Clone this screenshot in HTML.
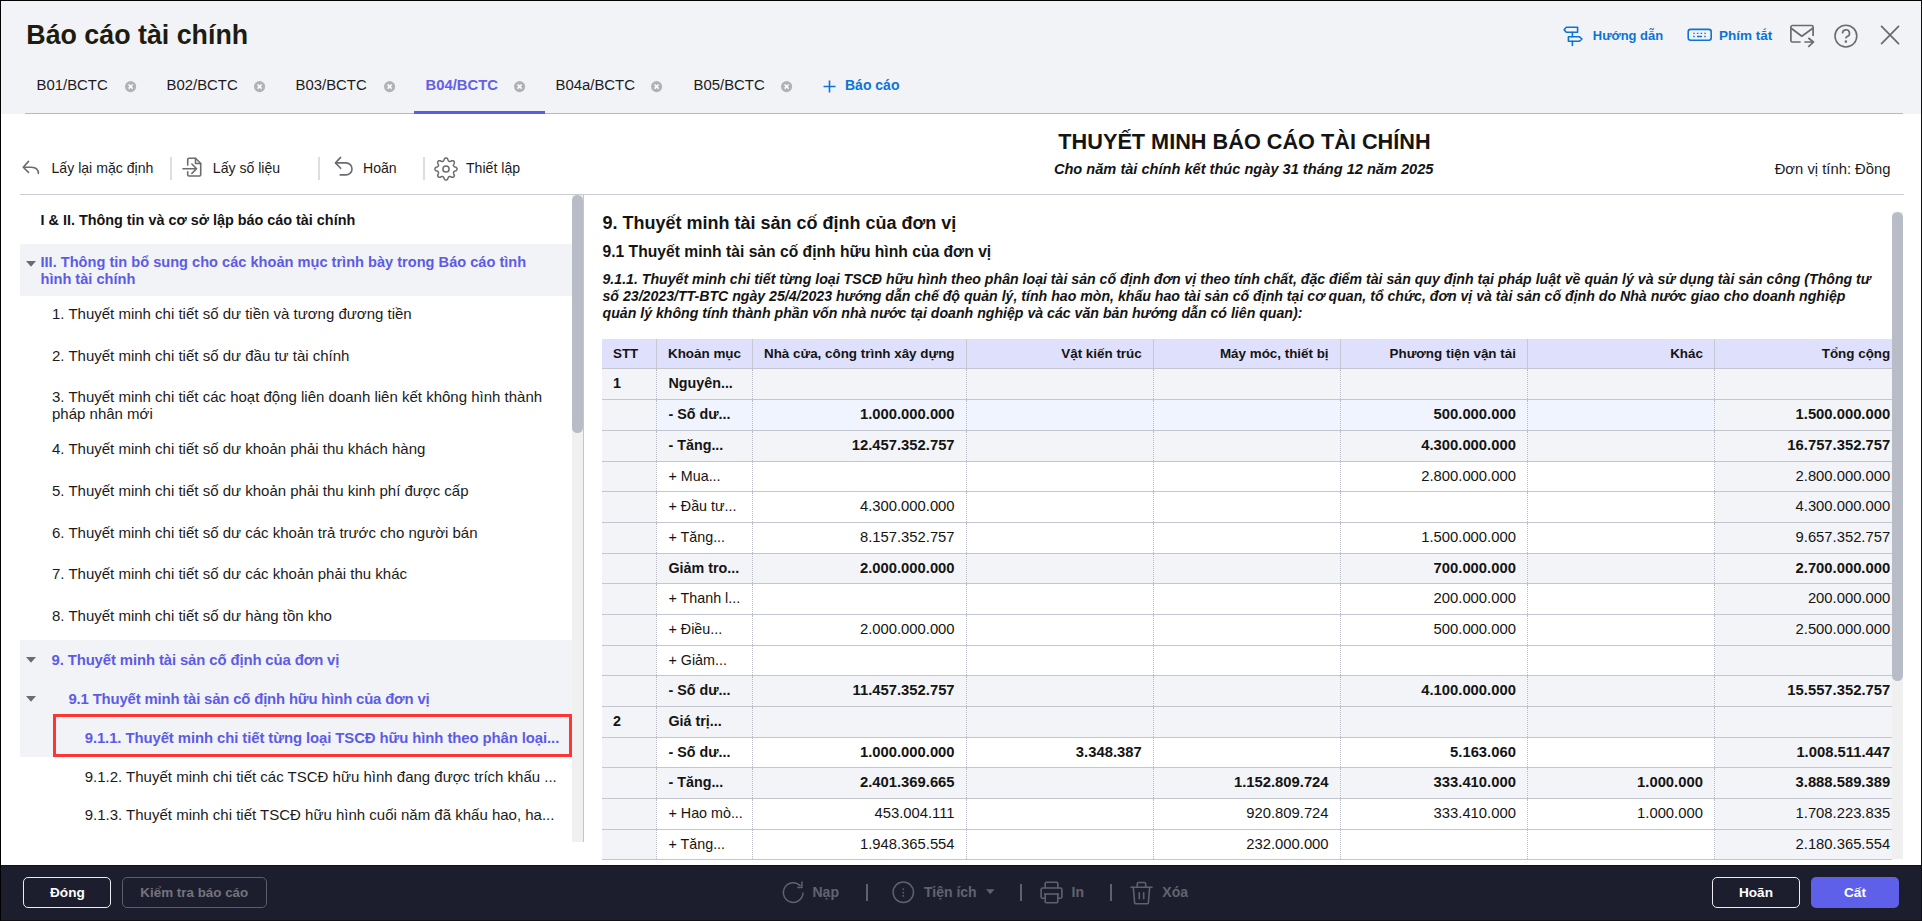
<!DOCTYPE html>
<html><head><meta charset="utf-8">
<style>
*{margin:0;padding:0;box-sizing:border-box}
html,body{width:1922px;height:921px;overflow:hidden;background:#000}
body{font-family:"Liberation Sans",sans-serif;position:relative}
.a{position:absolute;white-space:nowrap}
svg.a{overflow:visible}
</style></head><body>
<div class="a" style="left:0px;top:0px;width:1922px;height:921px;background:#fff;"></div>
<div class="a" style="left:1px;top:1px;width:1920px;height:112.5px;background:#f2f3f7;"></div>
<div class="a" style="left:26.3px;top:22.00px;font-size:26.8px;line-height:26.8px;color:#1e1c10;font-weight:bold;">Báo cáo tài chính</div>
<div class="a" style="left:36.5px;top:78.00px;font-size:14.9px;line-height:14.9px;color:#1b1b1b;">B01/BCTC</div>
<svg class="a" style="left:124.9px;top:81.3px" width="11.2" height="11.2" viewBox="0 0 11 11"><circle cx="5.5" cy="5.5" r="5.5" fill="#b1b1b6"/><path d="M3.5 3.5L7.5 7.5M7.5 3.5L3.5 7.5" stroke="#fff" stroke-width="1.5"/></svg>
<div class="a" style="left:166.5px;top:78.00px;font-size:14.9px;line-height:14.9px;color:#1b1b1b;">B02/BCTC</div>
<svg class="a" style="left:254.4px;top:81.3px" width="11.2" height="11.2" viewBox="0 0 11 11"><circle cx="5.5" cy="5.5" r="5.5" fill="#b1b1b6"/><path d="M3.5 3.5L7.5 7.5M7.5 3.5L3.5 7.5" stroke="#fff" stroke-width="1.5"/></svg>
<div class="a" style="left:295.5px;top:78.00px;font-size:14.9px;line-height:14.9px;color:#1b1b1b;">B03/BCTC</div>
<svg class="a" style="left:384.4px;top:81.3px" width="11.2" height="11.2" viewBox="0 0 11 11"><circle cx="5.5" cy="5.5" r="5.5" fill="#b1b1b6"/><path d="M3.5 3.5L7.5 7.5M7.5 3.5L3.5 7.5" stroke="#fff" stroke-width="1.5"/></svg>
<div class="a" style="left:425.5px;top:78.00px;font-size:14.8px;line-height:14.8px;color:#6360e6;font-weight:bold;">B04/BCTC</div>
<svg class="a" style="left:514.4px;top:81.3px" width="11.2" height="11.2" viewBox="0 0 11 11"><circle cx="5.5" cy="5.5" r="5.5" fill="#b1b1b6"/><path d="M3.5 3.5L7.5 7.5M7.5 3.5L3.5 7.5" stroke="#fff" stroke-width="1.5"/></svg>
<div class="a" style="left:555.5px;top:78.00px;font-size:14.9px;line-height:14.9px;color:#1b1b1b;">B04a/BCTC</div>
<svg class="a" style="left:651.4px;top:81.3px" width="11.2" height="11.2" viewBox="0 0 11 11"><circle cx="5.5" cy="5.5" r="5.5" fill="#b1b1b6"/><path d="M3.5 3.5L7.5 7.5M7.5 3.5L3.5 7.5" stroke="#fff" stroke-width="1.5"/></svg>
<div class="a" style="left:693.5px;top:78.00px;font-size:14.9px;line-height:14.9px;color:#1b1b1b;">B05/BCTC</div>
<svg class="a" style="left:781.4px;top:81.3px" width="11.2" height="11.2" viewBox="0 0 11 11"><circle cx="5.5" cy="5.5" r="5.5" fill="#b1b1b6"/><path d="M3.5 3.5L7.5 7.5M7.5 3.5L3.5 7.5" stroke="#fff" stroke-width="1.5"/></svg>
<svg class="a" style="left:823px;top:79.5px" width="13" height="13" viewBox="0 0 13 13"><path d="M6.5 0.5V12.5M0.5 6.5H12.5" stroke="#0b74d6" stroke-width="1.6"/></svg>
<div class="a" style="left:845px;top:78.00px;font-size:14px;line-height:14px;color:#0b74d6;font-weight:bold;">Báo cáo</div>
<div class="a" style="left:25px;top:112.5px;width:1878px;height:1.2px;background:#b9b9bd;"></div>
<div class="a" style="left:414px;top:110.5px;width:131px;height:3px;background:#5b5ce6;"></div>
<svg class="a" style="left:1558px;top:20px" width="32" height="32" viewBox="0 0 32 32" fill="none" stroke="#0b74d6" stroke-width="1.6" stroke-linejoin="round" stroke-linecap="round"><path d="M8.3 7.2H19.6V12.2H8.3L6.1 9.7Z"/><path d="M14.4 12.2V16.7M14.4 21.3V25.4"/><path d="M10.4 16.7H21.2L24 19L21.2 21.3H10.4Z"/></svg>
<div class="a" style="left:1592.8px;top:30.00px;font-size:12.95px;line-height:12.95px;color:#0b74d6;font-weight:bold;">Hướng dẫn</div>
<svg class="a" style="left:1682px;top:20px" width="40" height="30" viewBox="0 0 40 30" fill="none" stroke="#0b74d6" stroke-width="1.6"><rect x="6.2" y="9.4" width="23" height="10.8" rx="2.4"/><path d="M11.2 13.4h1.5M14.9 13.4h1.5M18.6 13.4h1.5M22.3 13.4h1.5M11.2 16.5h1.5M15 16.5h5M22.3 16.5h1.5" stroke-width="1.3"/></svg>
<div class="a" style="left:1719px;top:29.00px;font-size:13.5px;line-height:13.5px;color:#0b74d6;font-weight:bold;">Phím tắt</div>
<svg class="a" style="left:1785px;top:18px" width="34" height="34" viewBox="0 0 34 34" fill="none" stroke="#6b6b6e" stroke-width="1.7" stroke-linejoin="round"><path d="M15.6 24H7.3A1.5 1.5 0 0 1 5.9 22.5V9A1.5 1.5 0 0 1 7.3 7.5H26.6A1.5 1.5 0 0 1 28.1 9V18.1"/><path d="M6.2 10.3L16.8 18.2L27.8 10.3"/><path d="M19.4 24H28.5M23.3 20L28.5 24L23.3 28.8"/></svg>
<svg class="a" style="left:1833px;top:23px" width="26" height="26" viewBox="0 0 26 26" fill="none" stroke="#6b6b6e" stroke-width="1.6"><circle cx="12.9" cy="13.1" r="10.9"/><path d="M9.5 10.4A3.5 3.5 0 1 1 14.2 13.6C13.3 14 12.9 14.5 12.9 15.2V15.6"/><circle cx="12.9" cy="18.6" r="0.5" fill="#6b6b6e"/></svg>
<svg class="a" style="left:1878px;top:23px" width="24" height="24" viewBox="0 0 24 24" fill="none" stroke="#6b6b6e" stroke-width="1.7"><path d="M3.1 2.8L21 21.2M21 2.8L3.1 21.2"/></svg>
<svg class="a" style="left:15px;top:150px" width="30" height="35" viewBox="0 0 30 35" fill="none" stroke="#6b6b70" stroke-width="1.6" stroke-linecap="round" stroke-linejoin="round"><path d="M13.5 11.4L8.3 17.2L13.5 22.4"/><path d="M8.6 17.2H16.5Q23.2 17.4 23.4 23.4"/></svg>
<div class="a" style="left:51.5px;top:161.00px;font-size:14.1px;line-height:14.1px;color:#1b1b1b;">Lấy lại mặc định</div>
<div class="a" style="left:170.3px;top:157.3px;width:1.3px;height:22.4px;background:#dedee2;"></div>
<svg class="a" style="left:175px;top:150px" width="30" height="35" viewBox="0 0 30 35" fill="none" stroke="#6b6b70" stroke-width="1.6" stroke-linejoin="round" stroke-linecap="round"><path d="M12.7 15V9.6A1.3 1.3 0 0 1 14 8.3H20.5L25.7 13.5V24.7A1.3 1.3 0 0 1 24.4 26H14A1.3 1.3 0 0 1 12.7 24.7V21.9"/><path d="M20.5 8.3V13.5H25.7"/><path d="M8 18.7H21.6M16.9 14L21.6 18.7L16.9 23.4"/></svg>
<div class="a" style="left:212.8px;top:161.00px;font-size:14.1px;line-height:14.1px;color:#1b1b1b;">Lấy số liệu</div>
<div class="a" style="left:318.4px;top:157.3px;width:1.3px;height:22.4px;background:#dedee2;"></div>
<svg class="a" style="left:325px;top:150px" width="35" height="35" viewBox="0 0 35 35" fill="none" stroke="#6b6b70" stroke-width="1.6" stroke-linecap="round" stroke-linejoin="round"><path d="M15.6 7.4L10.5 12.9L15.6 18.3"/><path d="M10.7 12.9H21A6 6 0 0 1 21 24.9H15.2"/></svg>
<div class="a" style="left:363px;top:161.00px;font-size:14.1px;line-height:14.1px;color:#1b1b1b;">Hoãn</div>
<div class="a" style="left:423.3px;top:157.3px;width:1.3px;height:22.4px;background:#dedee2;"></div>
<svg class="a" style="left:434px;top:156.5px" width="24" height="24" viewBox="0 0 24 24" fill="none" stroke="#6b6b70" stroke-width="1.5" stroke-linejoin="round"><circle cx="12" cy="12" r="3.1"/><path d="M23.05 12.00L23.04 12.22L22.99 12.43L22.92 12.64L22.82 12.85L22.70 13.05L22.54 13.25L22.36 13.43L22.14 13.61L21.88 13.76L21.46 13.88L21.05 13.99L20.79 14.11L20.56 14.23L20.36 14.36L20.18 14.48L20.03 14.61L19.90 14.74L19.79 14.87L19.69 15.01L19.62 15.16L19.57 15.31L19.54 15.47L19.52 15.65L19.52 15.83L19.54 16.03L19.58 16.24L19.63 16.47L19.70 16.72L19.81 17.00L20.02 17.36L20.23 17.74L20.30 18.03L20.34 18.31L20.34 18.57L20.31 18.82L20.26 19.05L20.18 19.27L20.08 19.47L19.96 19.65L19.81 19.81L19.65 19.96L19.47 20.08L19.27 20.18L19.05 20.26L18.82 20.31L18.57 20.34L18.31 20.34L18.03 20.30L17.74 20.23L17.36 20.02L17.00 19.81L16.72 19.70L16.47 19.63L16.24 19.58L16.03 19.54L15.83 19.52L15.65 19.52L15.47 19.54L15.31 19.57L15.16 19.62L15.01 19.69L14.87 19.79L14.74 19.90L14.61 20.03L14.48 20.18L14.36 20.36L14.23 20.56L14.11 20.79L13.99 21.05L13.88 21.46L13.76 21.88L13.61 22.14L13.43 22.36L13.25 22.54L13.05 22.70L12.85 22.82L12.64 22.92L12.43 22.99L12.22 23.04L12.00 23.05L11.78 23.04L11.57 22.99L11.36 22.92L11.15 22.82L10.95 22.70L10.75 22.54L10.57 22.36L10.39 22.14L10.24 21.88L10.12 21.46L10.01 21.05L9.89 20.79L9.77 20.56L9.64 20.36L9.52 20.18L9.39 20.03L9.26 19.90L9.13 19.79L8.99 19.69L8.84 19.62L8.69 19.57L8.53 19.54L8.35 19.52L8.17 19.52L7.97 19.54L7.76 19.58L7.53 19.63L7.28 19.70L7.00 19.81L6.64 20.02L6.26 20.23L5.97 20.30L5.69 20.34L5.43 20.34L5.18 20.31L4.95 20.26L4.73 20.18L4.53 20.08L4.35 19.96L4.19 19.81L4.04 19.65L3.92 19.47L3.82 19.27L3.74 19.05L3.69 18.82L3.66 18.57L3.66 18.31L3.70 18.03L3.77 17.74L3.98 17.36L4.19 17.00L4.30 16.72L4.37 16.47L4.42 16.24L4.46 16.03L4.48 15.83L4.48 15.65L4.46 15.47L4.43 15.31L4.38 15.16L4.31 15.01L4.21 14.87L4.10 14.74L3.97 14.61L3.82 14.48L3.64 14.36L3.44 14.23L3.21 14.11L2.95 13.99L2.54 13.88L2.12 13.76L1.86 13.61L1.64 13.43L1.46 13.25L1.30 13.05L1.18 12.85L1.08 12.64L1.01 12.43L0.96 12.22L0.95 12.00L0.96 11.78L1.01 11.57L1.08 11.36L1.18 11.15L1.30 10.95L1.46 10.75L1.64 10.57L1.86 10.39L2.12 10.24L2.54 10.12L2.95 10.01L3.21 9.89L3.44 9.77L3.64 9.64L3.82 9.52L3.97 9.39L4.10 9.26L4.21 9.13L4.31 8.99L4.38 8.84L4.43 8.69L4.46 8.53L4.48 8.35L4.48 8.17L4.46 7.97L4.42 7.76L4.37 7.53L4.30 7.28L4.19 7.00L3.98 6.64L3.77 6.26L3.70 5.97L3.66 5.69L3.66 5.43L3.69 5.18L3.74 4.95L3.82 4.73L3.92 4.53L4.04 4.35L4.19 4.19L4.35 4.04L4.53 3.92L4.73 3.82L4.95 3.74L5.18 3.69L5.43 3.66L5.69 3.66L5.97 3.70L6.26 3.77L6.64 3.98L7.00 4.19L7.28 4.30L7.53 4.37L7.76 4.42L7.97 4.46L8.17 4.48L8.35 4.48L8.53 4.46L8.69 4.43L8.84 4.38L8.99 4.31L9.13 4.21L9.26 4.10L9.39 3.97L9.52 3.82L9.64 3.64L9.77 3.44L9.89 3.21L10.01 2.95L10.12 2.54L10.24 2.12L10.39 1.86L10.57 1.64L10.75 1.46L10.95 1.30L11.15 1.18L11.36 1.08L11.57 1.01L11.78 0.96L12.00 0.95L12.22 0.96L12.43 1.01L12.64 1.08L12.85 1.18L13.05 1.30L13.25 1.46L13.43 1.64L13.61 1.86L13.76 2.12L13.88 2.54L13.99 2.95L14.11 3.21L14.23 3.44L14.36 3.64L14.48 3.82L14.61 3.97L14.74 4.10L14.87 4.21L15.01 4.31L15.16 4.38L15.31 4.43L15.47 4.46L15.65 4.48L15.83 4.48L16.03 4.46L16.24 4.42L16.47 4.37L16.72 4.30L17.00 4.19L17.36 3.98L17.74 3.77L18.03 3.70L18.31 3.66L18.57 3.66L18.82 3.69L19.05 3.74L19.27 3.82L19.47 3.92L19.65 4.04L19.81 4.19L19.96 4.35L20.08 4.53L20.18 4.73L20.26 4.95L20.31 5.18L20.34 5.43L20.34 5.69L20.30 5.97L20.23 6.26L20.02 6.64L19.81 7.00L19.70 7.28L19.63 7.53L19.58 7.76L19.54 7.97L19.52 8.17L19.52 8.35L19.54 8.53L19.57 8.69L19.62 8.84L19.69 8.99L19.79 9.13L19.90 9.26L20.03 9.39L20.18 9.52L20.36 9.64L20.56 9.77L20.79 9.89L21.05 10.01L21.46 10.12L21.88 10.24L22.14 10.39L22.36 10.57L22.54 10.75L22.70 10.95L22.82 11.15L22.92 11.36L22.99 11.57L23.04 11.78Z"/></svg>
<div class="a" style="left:466px;top:161.00px;font-size:14.1px;line-height:14.1px;color:#1b1b1b;">Thiết lập</div>
<div class="a" style="left:19.5px;top:194px;width:1884px;height:1px;background:#c9ccd4;"></div>
<div class="a" style="left:994.5px;width:500px;text-align:center;top:131.00px;font-size:21.7px;line-height:21.7px;color:#141414;font-weight:bold;">THUYẾT MINH BÁO CÁO TÀI CHÍNH</div>
<div class="a" style="left:993.7px;width:500px;text-align:center;top:162.00px;font-size:14.6px;line-height:14.6px;color:#141414;font-weight:bold;font-style:italic;">Cho năm tài chính kết thúc ngày 31 tháng 12 năm 2025</div>
<div class="a" style="left:1690.5px;width:200px;text-align:right;top:162.00px;font-size:14.8px;line-height:14.8px;color:#1b1b1b;">Đơn vị tính: Đồng</div>
<div class="a" style="left:40.5px;top:213.00px;font-size:14.4px;line-height:14.4px;color:#141414;font-weight:bold;">I &amp; II. Thông tin và cơ sở lập báo cáo tài chính</div>
<div class="a" style="left:19.5px;top:244px;width:552.8px;height:52px;background:#f2f3f7;"></div>
<svg class="a" style="left:25.9px;top:260.9px" width="10" height="5.8" viewBox="0 0 10 5.8"><path d="M0 0H10L5 5.8Z" fill="#6b6b70"/></svg>
<div class="a" style="left:40.5px;top:255.00px;font-size:14.6px;line-height:14.6px;color:#5d5be6;font-weight:bold;">III. Thông tin bổ sung cho các khoản mục trình bày trong Báo cáo tình</div>
<div class="a" style="left:40.5px;top:272.00px;font-size:14.6px;line-height:14.6px;color:#5d5be6;font-weight:bold;">hình tài chính</div>
<div class="a" style="left:52px;top:306.00px;font-size:15px;line-height:15px;color:#1b1b1b;">1. Thuyết minh chi tiết số dư tiền và tương đương tiền</div>
<div class="a" style="left:52px;top:348.00px;font-size:15px;line-height:15px;color:#1b1b1b;">2. Thuyết minh chi tiết số dư đầu tư tài chính</div>
<div class="a" style="left:52px;top:389.00px;font-size:15px;line-height:15px;color:#1b1b1b;">3. Thuyết minh chi tiết các hoạt động liên doanh liên kết không hình thành</div>
<div class="a" style="left:52px;top:406.00px;font-size:15px;line-height:15px;color:#1b1b1b;">pháp nhân mới</div>
<div class="a" style="left:52px;top:441.00px;font-size:15px;line-height:15px;color:#1b1b1b;">4. Thuyết minh chi tiết số dư khoản phải thu khách hàng</div>
<div class="a" style="left:52px;top:483.00px;font-size:15px;line-height:15px;color:#1b1b1b;">5. Thuyết minh chi tiết số dư khoản phải thu kinh phí được cấp</div>
<div class="a" style="left:52px;top:525.00px;font-size:15px;line-height:15px;color:#1b1b1b;">6. Thuyết minh chi tiết số dư các khoản trả trước cho người bán</div>
<div class="a" style="left:52px;top:566.00px;font-size:15px;line-height:15px;color:#1b1b1b;">7. Thuyết minh chi tiết số dư các khoản phải thu khác</div>
<div class="a" style="left:52px;top:608.00px;font-size:15px;line-height:15px;color:#1b1b1b;">8. Thuyết minh chi tiết số dư hàng tồn kho</div>
<div class="a" style="left:19.5px;top:640px;width:552.8px;height:117px;background:#f2f3f7;"></div>
<svg class="a" style="left:25.9px;top:657.2px" width="10" height="5.8" viewBox="0 0 10 5.8"><path d="M0 0H10L5 5.8Z" fill="#6b6b70"/></svg>
<div class="a" style="left:51.5px;top:653.00px;font-size:14.9px;line-height:14.9px;color:#5d5be6;font-weight:bold;letter-spacing:-0.12px">9. Thuyết minh tài sản cố định của đơn vị</div>
<svg class="a" style="left:25.9px;top:696px" width="10" height="5.8" viewBox="0 0 10 5.8"><path d="M0 0H10L5 5.8Z" fill="#6b6b70"/></svg>
<div class="a" style="left:68.5px;top:692.00px;font-size:14.9px;line-height:14.9px;color:#5d5be6;font-weight:bold;letter-spacing:-0.17px">9.1 Thuyết minh tài sản cố định hữu hình của đơn vị</div>
<div class="a" style="left:53px;top:714px;width:519px;height:43px;border:3px solid #fd3535"></div>
<div class="a" style="left:84.7px;top:731.00px;font-size:14.9px;line-height:14.9px;color:#5d5be6;font-weight:bold;letter-spacing:-0.09px">9.1.1. Thuyết minh chi tiết từng loại TSCĐ hữu hình theo phân loại...</div>
<div class="a" style="left:84.7px;top:769.00px;font-size:15px;line-height:15px;color:#1b1b1b;">9.1.2. Thuyết minh chi tiết các TSCĐ hữu hình đang được trích khấu ...</div>
<div class="a" style="left:84.7px;top:807.00px;font-size:15px;line-height:15px;color:#1b1b1b;">9.1.3. Thuyết minh chi tiết TSCĐ hữu hình cuối năm đã khấu hao, ha...</div>
<div class="a" style="left:572.3px;top:195px;width:10.5px;height:646.8px;background:#f0f0f1;"></div>
<div class="a" style="left:582.5px;top:195px;width:1px;height:646.8px;background:#c3c6ce;"></div>
<div class="a" style="left:572.3px;top:195px;width:10.7px;height:237.7px;background:#b8bcc6;border-radius:5.3px"></div>
<div class="a" style="left:602.5px;top:214.00px;font-size:18px;line-height:18px;color:#141414;font-weight:bold;">9. Thuyết minh tài sản cố định của đơn vị</div>
<div class="a" style="left:602.5px;top:244.00px;font-size:15.66px;line-height:15.66px;color:#141414;font-weight:bold;">9.1 Thuyết minh tài sản cố định hữu hình của đơn vị</div>
<div class="a" style="left:602.5px;top:272.00px;font-size:14.15px;line-height:14.15px;color:#141414;font-weight:bold;font-style:italic;">9.1.1. Thuyết minh chi tiết từng loại TSCĐ hữu hình theo phân loại tài sản cố định đơn vị theo tính chất, đặc điểm tài sản quy định tại pháp luật về quản lý và sử dụng tài sản công (Thông tư</div>
<div class="a" style="left:602.5px;top:289.00px;font-size:14.15px;line-height:14.15px;color:#141414;font-weight:bold;font-style:italic;">số 23/2023/TT-BTC ngày 25/4/2023 hướng dẫn chế độ quản lý, tính hao mòn, khấu hao tài sản cố định tại cơ quan, tổ chức, đơn vị và tài sản cố định do Nhà nước giao cho doanh nghiệp</div>
<div class="a" style="left:602.5px;top:306.00px;font-size:14.15px;line-height:14.15px;color:#141414;font-weight:bold;font-style:italic;">quản lý không tính thành phần vốn nhà nước tại doanh nghiệp và các văn bản hướng dẫn có liên quan):</div>
<div class="a" style="left:1892px;top:212px;width:11px;height:646.7px;background:#f0f0f1;"></div>
<div class="a" style="left:1892px;top:212px;width:11px;height:468.8px;background:#b8bcc6;border-radius:5.5px"></div>
<div class="a" style="left:602px;top:339.3px;width:1290px;height:29.0px;background:#dfe0fc;"></div>
<div class="a" style="left:602px;top:368.3px;width:1290px;height:1px;background:#c3c6cf;"></div>
<div class="a" style="left:655.5px;top:339.3px;width:1px;height:29.0px;background:#c6c8d6;"></div>
<div class="a" style="left:752.0px;top:339.3px;width:1px;height:29.0px;background:#c6c8d6;"></div>
<div class="a" style="left:965.9px;top:339.3px;width:1px;height:29.0px;background:#c6c8d6;"></div>
<div class="a" style="left:1153.0px;top:339.3px;width:1px;height:29.0px;background:#c6c8d6;"></div>
<div class="a" style="left:1339.9px;top:339.3px;width:1px;height:29.0px;background:#c6c8d6;"></div>
<div class="a" style="left:1527.2px;top:339.3px;width:1px;height:29.0px;background:#c6c8d6;"></div>
<div class="a" style="left:1714.2px;top:339.3px;width:1px;height:29.0px;background:#c6c8d6;"></div>
<div class="a" style="left:613px;top:347.00px;font-size:13.4px;line-height:13.4px;color:#141414;font-weight:bold;">STT</div>
<div class="a" style="left:668px;top:347.00px;font-size:13.4px;line-height:13.4px;color:#141414;font-weight:bold;">Khoản mục</div>
<div class="a" style="left:764px;top:347.00px;font-size:13.4px;line-height:13.4px;color:#141414;font-weight:bold;">Nhà cửa, công trình xây dựng</div>
<div class="a" style="left:961.7px;width:180px;text-align:right;top:347.00px;font-size:13.4px;line-height:13.4px;color:#141414;font-weight:bold;">Vật kiến trúc</div>
<div class="a" style="left:1148.6000000000001px;width:180px;text-align:right;top:347.00px;font-size:13.4px;line-height:13.4px;color:#141414;font-weight:bold;">Máy móc, thiết bị</div>
<div class="a" style="left:1335.9px;width:180px;text-align:right;top:347.00px;font-size:13.4px;line-height:13.4px;color:#141414;font-weight:bold;">Phương tiện vận tải</div>
<div class="a" style="left:1522.9px;width:180px;text-align:right;top:347.00px;font-size:13.4px;line-height:13.4px;color:#141414;font-weight:bold;">Khác</div>
<div class="a" style="left:1710.2px;width:180px;text-align:right;top:347.00px;font-size:13.4px;line-height:13.4px;color:#141414;font-weight:bold;">Tổng cộng</div>
<div class="a" style="left:602px;top:369px;width:1290px;height:30px;background:#f3f4f7;"></div>
<div class="a" style="left:602px;top:369px;width:54px;height:30px;background:#f3f4f7;"></div>
<div class="a" style="left:1714.7px;top:369px;width:177.29999999999995px;height:30px;background:#f3f4f7;"></div>
<div class="a" style="left:602px;top:399px;width:1290px;height:1px;background:#c3c6cf;"></div>
<div class="a" style="left:655.5px;top:369px;width:0;height:30px;border-left:1px dotted #b9bcc6"></div>
<div class="a" style="left:752.0px;top:369px;width:0;height:30px;border-left:1px dotted #b9bcc6"></div>
<div class="a" style="left:965.9px;top:369px;width:0;height:30px;border-left:1px dotted #b9bcc6"></div>
<div class="a" style="left:1153.0px;top:369px;width:0;height:30px;border-left:1px dotted #b9bcc6"></div>
<div class="a" style="left:1339.9px;top:369px;width:0;height:30px;border-left:1px dotted #b9bcc6"></div>
<div class="a" style="left:1527.2px;top:369px;width:0;height:30px;border-left:1px dotted #b9bcc6"></div>
<div class="a" style="left:1714.2px;top:369px;width:0;height:30px;border-left:1px dotted #b9bcc6"></div>
<div class="a" style="left:613px;top:376.00px;font-size:14.3px;line-height:14.3px;color:#141414;font-weight:bold;">1</div>
<div class="a" style="left:668.5px;top:376.00px;font-size:14.3px;line-height:14.3px;color:#141414;font-weight:bold;">Nguyên...</div>
<div class="a" style="left:602px;top:400px;width:1290px;height:30px;background:#f0f4fe;"></div>
<div class="a" style="left:602px;top:400px;width:54px;height:30px;background:#f3f4f7;"></div>
<div class="a" style="left:1714.7px;top:400px;width:177.29999999999995px;height:30px;background:#f3f4f7;"></div>
<div class="a" style="left:602px;top:430px;width:1290px;height:1px;background:#c3c6cf;"></div>
<div class="a" style="left:655.5px;top:400px;width:0;height:30px;border-left:1px dotted #b9bcc6"></div>
<div class="a" style="left:752.0px;top:400px;width:0;height:30px;border-left:1px dotted #b9bcc6"></div>
<div class="a" style="left:965.9px;top:400px;width:0;height:30px;border-left:1px dotted #b9bcc6"></div>
<div class="a" style="left:1153.0px;top:400px;width:0;height:30px;border-left:1px dotted #b9bcc6"></div>
<div class="a" style="left:1339.9px;top:400px;width:0;height:30px;border-left:1px dotted #b9bcc6"></div>
<div class="a" style="left:1527.2px;top:400px;width:0;height:30px;border-left:1px dotted #b9bcc6"></div>
<div class="a" style="left:1714.2px;top:400px;width:0;height:30px;border-left:1px dotted #b9bcc6"></div>
<div class="a" style="left:668.5px;top:407.00px;font-size:14.3px;line-height:14.3px;color:#141414;font-weight:bold;">- Số dư...</div>
<div class="a" style="left:774.6px;width:180px;text-align:right;top:407.00px;font-size:14.8px;line-height:14.8px;color:#141414;font-weight:bold;">1.000.000.000</div>
<div class="a" style="left:1335.9px;width:180px;text-align:right;top:407.00px;font-size:14.8px;line-height:14.8px;color:#141414;font-weight:bold;">500.000.000</div>
<div class="a" style="left:1710.2px;width:180px;text-align:right;top:407.00px;font-size:14.8px;line-height:14.8px;color:#141414;font-weight:bold;">1.500.000.000</div>
<div class="a" style="left:602px;top:431px;width:1290px;height:30px;background:#f3f4f7;"></div>
<div class="a" style="left:602px;top:431px;width:54px;height:30px;background:#f3f4f7;"></div>
<div class="a" style="left:1714.7px;top:431px;width:177.29999999999995px;height:30px;background:#f3f4f7;"></div>
<div class="a" style="left:602px;top:461px;width:1290px;height:1px;background:#c3c6cf;"></div>
<div class="a" style="left:655.5px;top:431px;width:0;height:30px;border-left:1px dotted #b9bcc6"></div>
<div class="a" style="left:752.0px;top:431px;width:0;height:30px;border-left:1px dotted #b9bcc6"></div>
<div class="a" style="left:965.9px;top:431px;width:0;height:30px;border-left:1px dotted #b9bcc6"></div>
<div class="a" style="left:1153.0px;top:431px;width:0;height:30px;border-left:1px dotted #b9bcc6"></div>
<div class="a" style="left:1339.9px;top:431px;width:0;height:30px;border-left:1px dotted #b9bcc6"></div>
<div class="a" style="left:1527.2px;top:431px;width:0;height:30px;border-left:1px dotted #b9bcc6"></div>
<div class="a" style="left:1714.2px;top:431px;width:0;height:30px;border-left:1px dotted #b9bcc6"></div>
<div class="a" style="left:668.5px;top:438.00px;font-size:14.3px;line-height:14.3px;color:#141414;font-weight:bold;">- Tăng...</div>
<div class="a" style="left:774.6px;width:180px;text-align:right;top:438.00px;font-size:14.8px;line-height:14.8px;color:#141414;font-weight:bold;">12.457.352.757</div>
<div class="a" style="left:1335.9px;width:180px;text-align:right;top:438.00px;font-size:14.8px;line-height:14.8px;color:#141414;font-weight:bold;">4.300.000.000</div>
<div class="a" style="left:1710.2px;width:180px;text-align:right;top:438.00px;font-size:14.8px;line-height:14.8px;color:#141414;font-weight:bold;">16.757.352.757</div>
<div class="a" style="left:602px;top:462px;width:1290px;height:29px;background:#ffffff;"></div>
<div class="a" style="left:602px;top:462px;width:54px;height:29px;background:#f3f4f7;"></div>
<div class="a" style="left:1714.7px;top:462px;width:177.29999999999995px;height:29px;background:#f3f4f7;"></div>
<div class="a" style="left:602px;top:491px;width:1290px;height:1px;background:#c3c6cf;"></div>
<div class="a" style="left:655.5px;top:462px;width:0;height:29px;border-left:1px dotted #b9bcc6"></div>
<div class="a" style="left:752.0px;top:462px;width:0;height:29px;border-left:1px dotted #b9bcc6"></div>
<div class="a" style="left:965.9px;top:462px;width:0;height:29px;border-left:1px dotted #b9bcc6"></div>
<div class="a" style="left:1153.0px;top:462px;width:0;height:29px;border-left:1px dotted #b9bcc6"></div>
<div class="a" style="left:1339.9px;top:462px;width:0;height:29px;border-left:1px dotted #b9bcc6"></div>
<div class="a" style="left:1527.2px;top:462px;width:0;height:29px;border-left:1px dotted #b9bcc6"></div>
<div class="a" style="left:1714.2px;top:462px;width:0;height:29px;border-left:1px dotted #b9bcc6"></div>
<div class="a" style="left:668.5px;top:469.00px;font-size:14.3px;line-height:14.3px;color:#141414;">+ Mua...</div>
<div class="a" style="left:1335.9px;width:180px;text-align:right;top:469.00px;font-size:14.8px;line-height:14.8px;color:#141414;">2.800.000.000</div>
<div class="a" style="left:1710.2px;width:180px;text-align:right;top:469.00px;font-size:14.8px;line-height:14.8px;color:#141414;">2.800.000.000</div>
<div class="a" style="left:602px;top:492px;width:1290px;height:30px;background:#ffffff;"></div>
<div class="a" style="left:602px;top:492px;width:54px;height:30px;background:#f3f4f7;"></div>
<div class="a" style="left:1714.7px;top:492px;width:177.29999999999995px;height:30px;background:#f3f4f7;"></div>
<div class="a" style="left:602px;top:522px;width:1290px;height:1px;background:#c3c6cf;"></div>
<div class="a" style="left:655.5px;top:492px;width:0;height:30px;border-left:1px dotted #b9bcc6"></div>
<div class="a" style="left:752.0px;top:492px;width:0;height:30px;border-left:1px dotted #b9bcc6"></div>
<div class="a" style="left:965.9px;top:492px;width:0;height:30px;border-left:1px dotted #b9bcc6"></div>
<div class="a" style="left:1153.0px;top:492px;width:0;height:30px;border-left:1px dotted #b9bcc6"></div>
<div class="a" style="left:1339.9px;top:492px;width:0;height:30px;border-left:1px dotted #b9bcc6"></div>
<div class="a" style="left:1527.2px;top:492px;width:0;height:30px;border-left:1px dotted #b9bcc6"></div>
<div class="a" style="left:1714.2px;top:492px;width:0;height:30px;border-left:1px dotted #b9bcc6"></div>
<div class="a" style="left:668.5px;top:499.00px;font-size:14.3px;line-height:14.3px;color:#141414;">+ Đầu tư...</div>
<div class="a" style="left:774.6px;width:180px;text-align:right;top:499.00px;font-size:14.8px;line-height:14.8px;color:#141414;">4.300.000.000</div>
<div class="a" style="left:1710.2px;width:180px;text-align:right;top:499.00px;font-size:14.8px;line-height:14.8px;color:#141414;">4.300.000.000</div>
<div class="a" style="left:602px;top:523px;width:1290px;height:30px;background:#ffffff;"></div>
<div class="a" style="left:602px;top:523px;width:54px;height:30px;background:#f3f4f7;"></div>
<div class="a" style="left:1714.7px;top:523px;width:177.29999999999995px;height:30px;background:#f3f4f7;"></div>
<div class="a" style="left:602px;top:553px;width:1290px;height:1px;background:#c3c6cf;"></div>
<div class="a" style="left:655.5px;top:523px;width:0;height:30px;border-left:1px dotted #b9bcc6"></div>
<div class="a" style="left:752.0px;top:523px;width:0;height:30px;border-left:1px dotted #b9bcc6"></div>
<div class="a" style="left:965.9px;top:523px;width:0;height:30px;border-left:1px dotted #b9bcc6"></div>
<div class="a" style="left:1153.0px;top:523px;width:0;height:30px;border-left:1px dotted #b9bcc6"></div>
<div class="a" style="left:1339.9px;top:523px;width:0;height:30px;border-left:1px dotted #b9bcc6"></div>
<div class="a" style="left:1527.2px;top:523px;width:0;height:30px;border-left:1px dotted #b9bcc6"></div>
<div class="a" style="left:1714.2px;top:523px;width:0;height:30px;border-left:1px dotted #b9bcc6"></div>
<div class="a" style="left:668.5px;top:530.00px;font-size:14.3px;line-height:14.3px;color:#141414;">+ Tăng...</div>
<div class="a" style="left:774.6px;width:180px;text-align:right;top:530.00px;font-size:14.8px;line-height:14.8px;color:#141414;">8.157.352.757</div>
<div class="a" style="left:1335.9px;width:180px;text-align:right;top:530.00px;font-size:14.8px;line-height:14.8px;color:#141414;">1.500.000.000</div>
<div class="a" style="left:1710.2px;width:180px;text-align:right;top:530.00px;font-size:14.8px;line-height:14.8px;color:#141414;">9.657.352.757</div>
<div class="a" style="left:602px;top:554px;width:1290px;height:29px;background:#f3f4f7;"></div>
<div class="a" style="left:602px;top:554px;width:54px;height:29px;background:#f3f4f7;"></div>
<div class="a" style="left:1714.7px;top:554px;width:177.29999999999995px;height:29px;background:#f3f4f7;"></div>
<div class="a" style="left:602px;top:583px;width:1290px;height:1px;background:#c3c6cf;"></div>
<div class="a" style="left:655.5px;top:554px;width:0;height:29px;border-left:1px dotted #b9bcc6"></div>
<div class="a" style="left:752.0px;top:554px;width:0;height:29px;border-left:1px dotted #b9bcc6"></div>
<div class="a" style="left:965.9px;top:554px;width:0;height:29px;border-left:1px dotted #b9bcc6"></div>
<div class="a" style="left:1153.0px;top:554px;width:0;height:29px;border-left:1px dotted #b9bcc6"></div>
<div class="a" style="left:1339.9px;top:554px;width:0;height:29px;border-left:1px dotted #b9bcc6"></div>
<div class="a" style="left:1527.2px;top:554px;width:0;height:29px;border-left:1px dotted #b9bcc6"></div>
<div class="a" style="left:1714.2px;top:554px;width:0;height:29px;border-left:1px dotted #b9bcc6"></div>
<div class="a" style="left:668.5px;top:561.00px;font-size:14.3px;line-height:14.3px;color:#141414;font-weight:bold;">Giảm tro...</div>
<div class="a" style="left:774.6px;width:180px;text-align:right;top:561.00px;font-size:14.8px;line-height:14.8px;color:#141414;font-weight:bold;">2.000.000.000</div>
<div class="a" style="left:1335.9px;width:180px;text-align:right;top:561.00px;font-size:14.8px;line-height:14.8px;color:#141414;font-weight:bold;">700.000.000</div>
<div class="a" style="left:1710.2px;width:180px;text-align:right;top:561.00px;font-size:14.8px;line-height:14.8px;color:#141414;font-weight:bold;">2.700.000.000</div>
<div class="a" style="left:602px;top:584px;width:1290px;height:30px;background:#ffffff;"></div>
<div class="a" style="left:602px;top:584px;width:54px;height:30px;background:#f3f4f7;"></div>
<div class="a" style="left:1714.7px;top:584px;width:177.29999999999995px;height:30px;background:#f3f4f7;"></div>
<div class="a" style="left:602px;top:614px;width:1290px;height:1px;background:#c3c6cf;"></div>
<div class="a" style="left:655.5px;top:584px;width:0;height:30px;border-left:1px dotted #b9bcc6"></div>
<div class="a" style="left:752.0px;top:584px;width:0;height:30px;border-left:1px dotted #b9bcc6"></div>
<div class="a" style="left:965.9px;top:584px;width:0;height:30px;border-left:1px dotted #b9bcc6"></div>
<div class="a" style="left:1153.0px;top:584px;width:0;height:30px;border-left:1px dotted #b9bcc6"></div>
<div class="a" style="left:1339.9px;top:584px;width:0;height:30px;border-left:1px dotted #b9bcc6"></div>
<div class="a" style="left:1527.2px;top:584px;width:0;height:30px;border-left:1px dotted #b9bcc6"></div>
<div class="a" style="left:1714.2px;top:584px;width:0;height:30px;border-left:1px dotted #b9bcc6"></div>
<div class="a" style="left:668.5px;top:591.00px;font-size:14.3px;line-height:14.3px;color:#141414;">+ Thanh l...</div>
<div class="a" style="left:1335.9px;width:180px;text-align:right;top:591.00px;font-size:14.8px;line-height:14.8px;color:#141414;">200.000.000</div>
<div class="a" style="left:1710.2px;width:180px;text-align:right;top:591.00px;font-size:14.8px;line-height:14.8px;color:#141414;">200.000.000</div>
<div class="a" style="left:602px;top:615px;width:1290px;height:30px;background:#ffffff;"></div>
<div class="a" style="left:602px;top:615px;width:54px;height:30px;background:#f3f4f7;"></div>
<div class="a" style="left:1714.7px;top:615px;width:177.29999999999995px;height:30px;background:#f3f4f7;"></div>
<div class="a" style="left:602px;top:645px;width:1290px;height:1px;background:#c3c6cf;"></div>
<div class="a" style="left:655.5px;top:615px;width:0;height:30px;border-left:1px dotted #b9bcc6"></div>
<div class="a" style="left:752.0px;top:615px;width:0;height:30px;border-left:1px dotted #b9bcc6"></div>
<div class="a" style="left:965.9px;top:615px;width:0;height:30px;border-left:1px dotted #b9bcc6"></div>
<div class="a" style="left:1153.0px;top:615px;width:0;height:30px;border-left:1px dotted #b9bcc6"></div>
<div class="a" style="left:1339.9px;top:615px;width:0;height:30px;border-left:1px dotted #b9bcc6"></div>
<div class="a" style="left:1527.2px;top:615px;width:0;height:30px;border-left:1px dotted #b9bcc6"></div>
<div class="a" style="left:1714.2px;top:615px;width:0;height:30px;border-left:1px dotted #b9bcc6"></div>
<div class="a" style="left:668.5px;top:622.00px;font-size:14.3px;line-height:14.3px;color:#141414;">+ Điều...</div>
<div class="a" style="left:774.6px;width:180px;text-align:right;top:622.00px;font-size:14.8px;line-height:14.8px;color:#141414;">2.000.000.000</div>
<div class="a" style="left:1335.9px;width:180px;text-align:right;top:622.00px;font-size:14.8px;line-height:14.8px;color:#141414;">500.000.000</div>
<div class="a" style="left:1710.2px;width:180px;text-align:right;top:622.00px;font-size:14.8px;line-height:14.8px;color:#141414;">2.500.000.000</div>
<div class="a" style="left:602px;top:646px;width:1290px;height:29px;background:#ffffff;"></div>
<div class="a" style="left:602px;top:646px;width:54px;height:29px;background:#f3f4f7;"></div>
<div class="a" style="left:1714.7px;top:646px;width:177.29999999999995px;height:29px;background:#f3f4f7;"></div>
<div class="a" style="left:602px;top:675px;width:1290px;height:1px;background:#c3c6cf;"></div>
<div class="a" style="left:655.5px;top:646px;width:0;height:29px;border-left:1px dotted #b9bcc6"></div>
<div class="a" style="left:752.0px;top:646px;width:0;height:29px;border-left:1px dotted #b9bcc6"></div>
<div class="a" style="left:965.9px;top:646px;width:0;height:29px;border-left:1px dotted #b9bcc6"></div>
<div class="a" style="left:1153.0px;top:646px;width:0;height:29px;border-left:1px dotted #b9bcc6"></div>
<div class="a" style="left:1339.9px;top:646px;width:0;height:29px;border-left:1px dotted #b9bcc6"></div>
<div class="a" style="left:1527.2px;top:646px;width:0;height:29px;border-left:1px dotted #b9bcc6"></div>
<div class="a" style="left:1714.2px;top:646px;width:0;height:29px;border-left:1px dotted #b9bcc6"></div>
<div class="a" style="left:668.5px;top:653.00px;font-size:14.3px;line-height:14.3px;color:#141414;">+ Giảm...</div>
<div class="a" style="left:602px;top:676px;width:1290px;height:30px;background:#f3f4f7;"></div>
<div class="a" style="left:602px;top:676px;width:54px;height:30px;background:#f3f4f7;"></div>
<div class="a" style="left:1714.7px;top:676px;width:177.29999999999995px;height:30px;background:#f3f4f7;"></div>
<div class="a" style="left:602px;top:706px;width:1290px;height:1px;background:#c3c6cf;"></div>
<div class="a" style="left:655.5px;top:676px;width:0;height:30px;border-left:1px dotted #b9bcc6"></div>
<div class="a" style="left:752.0px;top:676px;width:0;height:30px;border-left:1px dotted #b9bcc6"></div>
<div class="a" style="left:965.9px;top:676px;width:0;height:30px;border-left:1px dotted #b9bcc6"></div>
<div class="a" style="left:1153.0px;top:676px;width:0;height:30px;border-left:1px dotted #b9bcc6"></div>
<div class="a" style="left:1339.9px;top:676px;width:0;height:30px;border-left:1px dotted #b9bcc6"></div>
<div class="a" style="left:1527.2px;top:676px;width:0;height:30px;border-left:1px dotted #b9bcc6"></div>
<div class="a" style="left:1714.2px;top:676px;width:0;height:30px;border-left:1px dotted #b9bcc6"></div>
<div class="a" style="left:668.5px;top:683.00px;font-size:14.3px;line-height:14.3px;color:#141414;font-weight:bold;">- Số dư...</div>
<div class="a" style="left:774.6px;width:180px;text-align:right;top:683.00px;font-size:14.8px;line-height:14.8px;color:#141414;font-weight:bold;">11.457.352.757</div>
<div class="a" style="left:1335.9px;width:180px;text-align:right;top:683.00px;font-size:14.8px;line-height:14.8px;color:#141414;font-weight:bold;">4.100.000.000</div>
<div class="a" style="left:1710.2px;width:180px;text-align:right;top:683.00px;font-size:14.8px;line-height:14.8px;color:#141414;font-weight:bold;">15.557.352.757</div>
<div class="a" style="left:602px;top:707px;width:1290px;height:30px;background:#f3f4f7;"></div>
<div class="a" style="left:602px;top:707px;width:54px;height:30px;background:#f3f4f7;"></div>
<div class="a" style="left:1714.7px;top:707px;width:177.29999999999995px;height:30px;background:#f3f4f7;"></div>
<div class="a" style="left:602px;top:737px;width:1290px;height:1px;background:#c3c6cf;"></div>
<div class="a" style="left:655.5px;top:707px;width:0;height:30px;border-left:1px dotted #b9bcc6"></div>
<div class="a" style="left:752.0px;top:707px;width:0;height:30px;border-left:1px dotted #b9bcc6"></div>
<div class="a" style="left:965.9px;top:707px;width:0;height:30px;border-left:1px dotted #b9bcc6"></div>
<div class="a" style="left:1153.0px;top:707px;width:0;height:30px;border-left:1px dotted #b9bcc6"></div>
<div class="a" style="left:1339.9px;top:707px;width:0;height:30px;border-left:1px dotted #b9bcc6"></div>
<div class="a" style="left:1527.2px;top:707px;width:0;height:30px;border-left:1px dotted #b9bcc6"></div>
<div class="a" style="left:1714.2px;top:707px;width:0;height:30px;border-left:1px dotted #b9bcc6"></div>
<div class="a" style="left:613px;top:714.00px;font-size:14.3px;line-height:14.3px;color:#141414;font-weight:bold;">2</div>
<div class="a" style="left:668.5px;top:714.00px;font-size:14.3px;line-height:14.3px;color:#141414;font-weight:bold;">Giá trị...</div>
<div class="a" style="left:602px;top:738px;width:1290px;height:29px;background:#ffffff;"></div>
<div class="a" style="left:602px;top:738px;width:54px;height:29px;background:#f3f4f7;"></div>
<div class="a" style="left:1714.7px;top:738px;width:177.29999999999995px;height:29px;background:#f3f4f7;"></div>
<div class="a" style="left:602px;top:767px;width:1290px;height:1px;background:#c3c6cf;"></div>
<div class="a" style="left:655.5px;top:738px;width:0;height:29px;border-left:1px dotted #b9bcc6"></div>
<div class="a" style="left:752.0px;top:738px;width:0;height:29px;border-left:1px dotted #b9bcc6"></div>
<div class="a" style="left:965.9px;top:738px;width:0;height:29px;border-left:1px dotted #b9bcc6"></div>
<div class="a" style="left:1153.0px;top:738px;width:0;height:29px;border-left:1px dotted #b9bcc6"></div>
<div class="a" style="left:1339.9px;top:738px;width:0;height:29px;border-left:1px dotted #b9bcc6"></div>
<div class="a" style="left:1527.2px;top:738px;width:0;height:29px;border-left:1px dotted #b9bcc6"></div>
<div class="a" style="left:1714.2px;top:738px;width:0;height:29px;border-left:1px dotted #b9bcc6"></div>
<div class="a" style="left:668.5px;top:745.00px;font-size:14.3px;line-height:14.3px;color:#141414;font-weight:bold;">- Số dư...</div>
<div class="a" style="left:774.6px;width:180px;text-align:right;top:745.00px;font-size:14.8px;line-height:14.8px;color:#141414;font-weight:bold;">1.000.000.000</div>
<div class="a" style="left:961.7px;width:180px;text-align:right;top:745.00px;font-size:14.8px;line-height:14.8px;color:#141414;font-weight:bold;">3.348.387</div>
<div class="a" style="left:1335.9px;width:180px;text-align:right;top:745.00px;font-size:14.8px;line-height:14.8px;color:#141414;font-weight:bold;">5.163.060</div>
<div class="a" style="left:1710.2px;width:180px;text-align:right;top:745.00px;font-size:14.8px;line-height:14.8px;color:#141414;font-weight:bold;">1.008.511.447</div>
<div class="a" style="left:602px;top:768px;width:1290px;height:30px;background:#f3f4f7;"></div>
<div class="a" style="left:602px;top:768px;width:54px;height:30px;background:#f3f4f7;"></div>
<div class="a" style="left:1714.7px;top:768px;width:177.29999999999995px;height:30px;background:#f3f4f7;"></div>
<div class="a" style="left:602px;top:798px;width:1290px;height:1px;background:#c3c6cf;"></div>
<div class="a" style="left:655.5px;top:768px;width:0;height:30px;border-left:1px dotted #b9bcc6"></div>
<div class="a" style="left:752.0px;top:768px;width:0;height:30px;border-left:1px dotted #b9bcc6"></div>
<div class="a" style="left:965.9px;top:768px;width:0;height:30px;border-left:1px dotted #b9bcc6"></div>
<div class="a" style="left:1153.0px;top:768px;width:0;height:30px;border-left:1px dotted #b9bcc6"></div>
<div class="a" style="left:1339.9px;top:768px;width:0;height:30px;border-left:1px dotted #b9bcc6"></div>
<div class="a" style="left:1527.2px;top:768px;width:0;height:30px;border-left:1px dotted #b9bcc6"></div>
<div class="a" style="left:1714.2px;top:768px;width:0;height:30px;border-left:1px dotted #b9bcc6"></div>
<div class="a" style="left:668.5px;top:775.00px;font-size:14.3px;line-height:14.3px;color:#141414;font-weight:bold;">- Tăng...</div>
<div class="a" style="left:774.6px;width:180px;text-align:right;top:775.00px;font-size:14.8px;line-height:14.8px;color:#141414;font-weight:bold;">2.401.369.665</div>
<div class="a" style="left:1148.6000000000001px;width:180px;text-align:right;top:775.00px;font-size:14.8px;line-height:14.8px;color:#141414;font-weight:bold;">1.152.809.724</div>
<div class="a" style="left:1335.9px;width:180px;text-align:right;top:775.00px;font-size:14.8px;line-height:14.8px;color:#141414;font-weight:bold;">333.410.000</div>
<div class="a" style="left:1522.9px;width:180px;text-align:right;top:775.00px;font-size:14.8px;line-height:14.8px;color:#141414;font-weight:bold;">1.000.000</div>
<div class="a" style="left:1710.2px;width:180px;text-align:right;top:775.00px;font-size:14.8px;line-height:14.8px;color:#141414;font-weight:bold;">3.888.589.389</div>
<div class="a" style="left:602px;top:799px;width:1290px;height:30px;background:#ffffff;"></div>
<div class="a" style="left:602px;top:799px;width:54px;height:30px;background:#f3f4f7;"></div>
<div class="a" style="left:1714.7px;top:799px;width:177.29999999999995px;height:30px;background:#f3f4f7;"></div>
<div class="a" style="left:602px;top:829px;width:1290px;height:1px;background:#c3c6cf;"></div>
<div class="a" style="left:655.5px;top:799px;width:0;height:30px;border-left:1px dotted #b9bcc6"></div>
<div class="a" style="left:752.0px;top:799px;width:0;height:30px;border-left:1px dotted #b9bcc6"></div>
<div class="a" style="left:965.9px;top:799px;width:0;height:30px;border-left:1px dotted #b9bcc6"></div>
<div class="a" style="left:1153.0px;top:799px;width:0;height:30px;border-left:1px dotted #b9bcc6"></div>
<div class="a" style="left:1339.9px;top:799px;width:0;height:30px;border-left:1px dotted #b9bcc6"></div>
<div class="a" style="left:1527.2px;top:799px;width:0;height:30px;border-left:1px dotted #b9bcc6"></div>
<div class="a" style="left:1714.2px;top:799px;width:0;height:30px;border-left:1px dotted #b9bcc6"></div>
<div class="a" style="left:668.5px;top:806.00px;font-size:14.3px;line-height:14.3px;color:#141414;">+ Hao mò...</div>
<div class="a" style="left:774.6px;width:180px;text-align:right;top:806.00px;font-size:14.8px;line-height:14.8px;color:#141414;">453.004.111</div>
<div class="a" style="left:1148.6000000000001px;width:180px;text-align:right;top:806.00px;font-size:14.8px;line-height:14.8px;color:#141414;">920.809.724</div>
<div class="a" style="left:1335.9px;width:180px;text-align:right;top:806.00px;font-size:14.8px;line-height:14.8px;color:#141414;">333.410.000</div>
<div class="a" style="left:1522.9px;width:180px;text-align:right;top:806.00px;font-size:14.8px;line-height:14.8px;color:#141414;">1.000.000</div>
<div class="a" style="left:1710.2px;width:180px;text-align:right;top:806.00px;font-size:14.8px;line-height:14.8px;color:#141414;">1.708.223.835</div>
<div class="a" style="left:602px;top:830px;width:1290px;height:29px;background:#ffffff;"></div>
<div class="a" style="left:602px;top:830px;width:54px;height:29px;background:#f3f4f7;"></div>
<div class="a" style="left:1714.7px;top:830px;width:177.29999999999995px;height:29px;background:#f3f4f7;"></div>
<div class="a" style="left:602px;top:859px;width:1290px;height:1px;background:#c3c6cf;"></div>
<div class="a" style="left:655.5px;top:830px;width:0;height:29px;border-left:1px dotted #b9bcc6"></div>
<div class="a" style="left:752.0px;top:830px;width:0;height:29px;border-left:1px dotted #b9bcc6"></div>
<div class="a" style="left:965.9px;top:830px;width:0;height:29px;border-left:1px dotted #b9bcc6"></div>
<div class="a" style="left:1153.0px;top:830px;width:0;height:29px;border-left:1px dotted #b9bcc6"></div>
<div class="a" style="left:1339.9px;top:830px;width:0;height:29px;border-left:1px dotted #b9bcc6"></div>
<div class="a" style="left:1527.2px;top:830px;width:0;height:29px;border-left:1px dotted #b9bcc6"></div>
<div class="a" style="left:1714.2px;top:830px;width:0;height:29px;border-left:1px dotted #b9bcc6"></div>
<div class="a" style="left:668.5px;top:837.00px;font-size:14.3px;line-height:14.3px;color:#141414;">+ Tăng...</div>
<div class="a" style="left:774.6px;width:180px;text-align:right;top:837.00px;font-size:14.8px;line-height:14.8px;color:#141414;">1.948.365.554</div>
<div class="a" style="left:1148.6000000000001px;width:180px;text-align:right;top:837.00px;font-size:14.8px;line-height:14.8px;color:#141414;">232.000.000</div>
<div class="a" style="left:1710.2px;width:180px;text-align:right;top:837.00px;font-size:14.8px;line-height:14.8px;color:#141414;">2.180.365.554</div>
<div class="a" style="left:1892px;top:212px;width:11px;height:646.7px;background:#f0f0f1;"></div>
<div class="a" style="left:1892px;top:212px;width:11px;height:468.8px;background:#b8bcc6;border-radius:5.5px"></div>
<div class="a" style="left:1px;top:865px;width:1920px;height:55px;background:#1d1e2d;"></div>
<div class="a" style="left:1px;top:865px;width:1920px;height:1px;background:#0f1020;"></div>
<div class="a" style="left:23px;top:877px;width:88px;height:31px;border:1.5px solid #ececf0;border-radius:5px"></div>
<div class="a" style="left:27.400000000000006px;width:80px;text-align:center;top:886.00px;font-size:13.6px;line-height:13.6px;color:#fff;font-weight:bold;">Đóng</div>
<div class="a" style="left:122px;top:877px;width:145px;height:31px;border:1.2px solid #5c5d66;border-radius:5px"></div>
<div class="a" style="left:124.30000000000001px;width:140px;text-align:center;top:886.00px;font-size:13.4px;line-height:13.4px;color:#74737c;font-weight:bold;">Kiểm tra báo cáo</div>
<svg class="a" style="left:778px;top:878px" width="30" height="30" viewBox="0 0 30 30" fill="none" stroke="#5f6170" stroke-width="1.5" stroke-linejoin="round"><path d="M25 14.5A9.8 9.8 0 1 1 22.5 8"/><path d="M23.9 3.6V9.4H19.2"/></svg>
<div class="a" style="left:812.5px;top:885.00px;font-size:14px;line-height:14px;color:#62636f;font-weight:bold;">Nạp</div>
<div class="a" style="left:866px;top:884px;width:2px;height:16.7px;background:#5f6170;"></div>
<svg class="a" style="left:889px;top:878px" width="30" height="30" viewBox="0 0 30 30" fill="none" stroke="#5f6170" stroke-width="1.5"><circle cx="14.3" cy="14.3" r="10.2"/><circle cx="14.3" cy="11.1" r="0.9" fill="#5f6170" stroke="none"/><circle cx="14.3" cy="14.6" r="0.9" fill="#5f6170" stroke="none"/><circle cx="14.3" cy="17.9" r="0.9" fill="#5f6170" stroke="none"/></svg>
<div class="a" style="left:924px;top:885.00px;font-size:14px;line-height:14px;color:#62636f;font-weight:bold;">Tiện ích</div>
<svg class="a" style="left:985.5px;top:888.7px" width="8.5" height="5.5" viewBox="0 0 10 6"><path d="M0 0H10L5 6Z" fill="#5f6170"/></svg>
<div class="a" style="left:1020px;top:884px;width:2px;height:16.7px;background:#5f6170;"></div>
<svg class="a" style="left:1040px;top:881px" width="23" height="23" viewBox="0 0 23 23" fill="none" stroke="#5f6170" stroke-width="1.6" stroke-linejoin="round"><path d="M5.2 7V2.5A1.2 1.2 0 0 1 6.4 1.3H16.6A1.2 1.2 0 0 1 17.8 2.5V7"/><path d="M5.2 17.2H2.6A1.5 1.5 0 0 1 1.1 15.7V8.6A1.6 1.6 0 0 1 2.7 7H20.3A1.6 1.6 0 0 1 21.9 8.6V15.7A1.5 1.5 0 0 1 20.4 17.2H17.8"/><path d="M4 13H19"/><path d="M5.2 13V20.5A1.2 1.2 0 0 0 6.4 21.7H16.6A1.2 1.2 0 0 0 17.8 20.5V13"/></svg>
<div class="a" style="left:1071.5px;top:885.00px;font-size:14px;line-height:14px;color:#62636f;font-weight:bold;">In</div>
<div class="a" style="left:1110px;top:884px;width:2px;height:16.7px;background:#5f6170;"></div>
<svg class="a" style="left:1130px;top:880.5px" width="23" height="24" viewBox="0 0 23 24" fill="none" stroke="#5f6170" stroke-width="1.6" stroke-linejoin="round" stroke-linecap="round"><path d="M1 6.3H22"/><path d="M7.3 6.3V2.8A1.3 1.3 0 0 1 8.6 1.5H14.4A1.3 1.3 0 0 1 15.7 2.8V6.3"/><path d="M3.3 6.3L4.6 21.6A1.3 1.3 0 0 0 5.9 22.8H17.1A1.3 1.3 0 0 0 18.4 21.6L19.7 6.3"/><path d="M9.3 11.8V17.7M13.7 11.8V17.7"/></svg>
<div class="a" style="left:1162.3px;top:885.00px;font-size:14px;line-height:14px;color:#62636f;font-weight:bold;">Xóa</div>
<div class="a" style="left:1712px;top:877px;width:88px;height:31px;border:1.5px solid #ececf0;border-radius:5px"></div>
<div class="a" style="left:1716.0px;width:80px;text-align:center;top:886.00px;font-size:13.6px;line-height:13.6px;color:#fff;font-weight:bold;">Hoãn</div>
<div class="a" style="left:1811px;top:877px;width:88px;height:31px;background:#5e60ea;border-radius:5px"></div>
<div class="a" style="left:1815.0px;width:80px;text-align:center;top:886.00px;font-size:13.6px;line-height:13.6px;color:#fff;font-weight:bold;">Cất</div>
<div class="a" style="left:0;top:0;width:1922px;height:921px;border:1px solid #000;border-right-color:#111;border-bottom-color:#111"></div>
</body></html>
